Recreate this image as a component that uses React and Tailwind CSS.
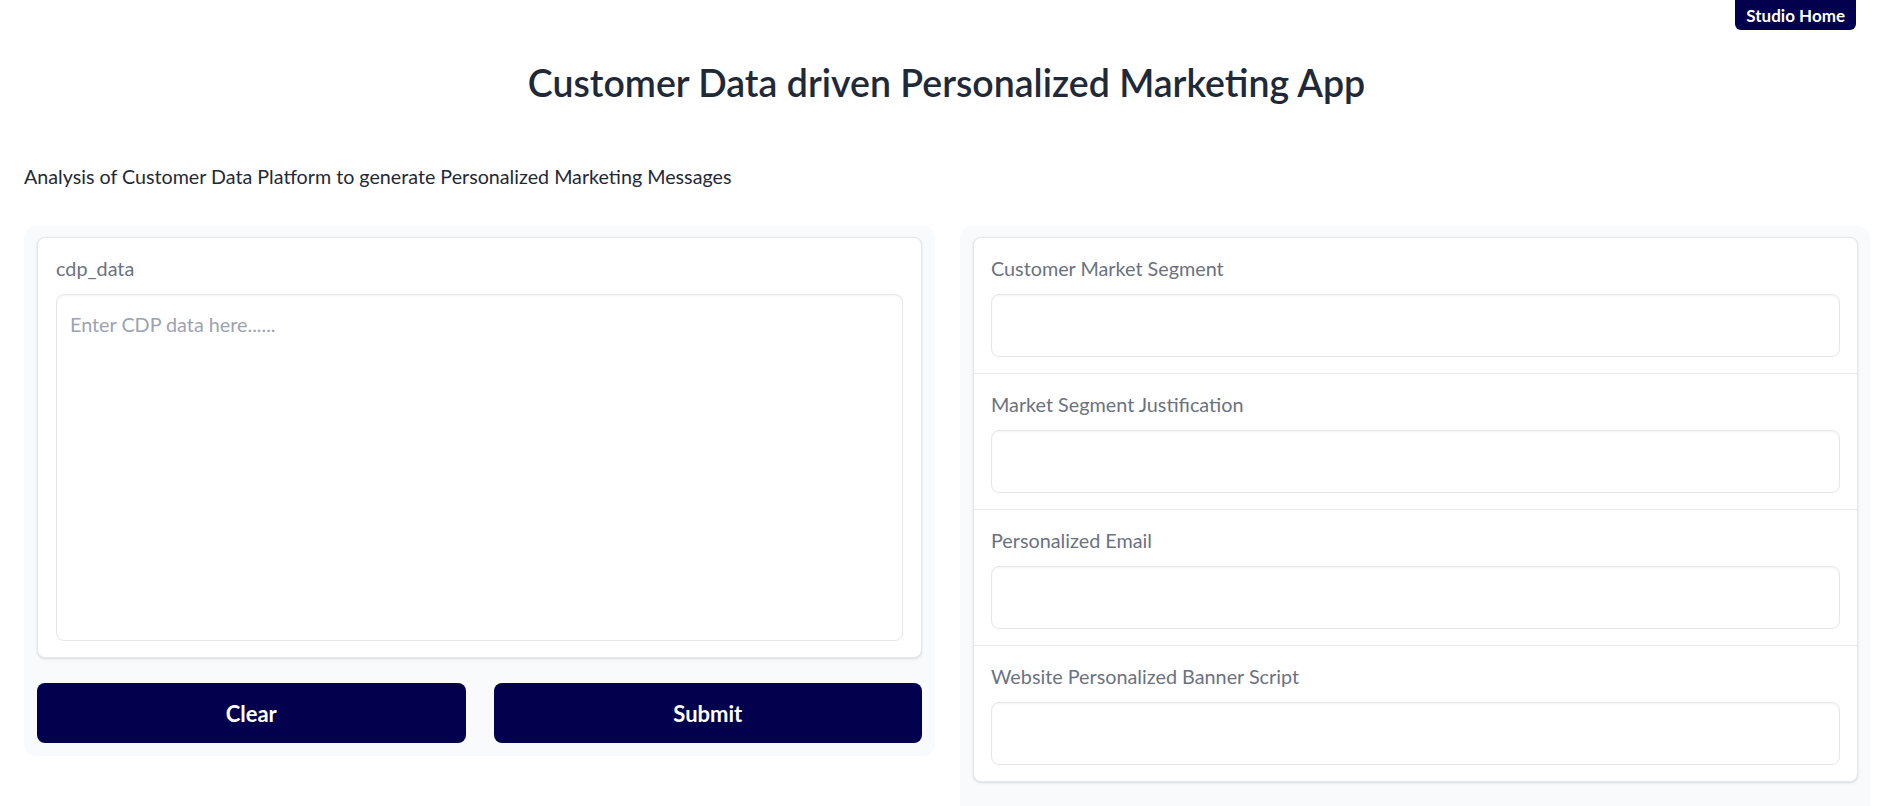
import React from 'react';

const outputs = [
  'Customer Market Segment',
  'Market Segment Justification',
  'Personalized Email',
  'Website Personalized Banner Script',
];

export default function App() {
  return (
    <div className="min-h-screen bg-white text-[#1f2937]" style={{ fontFamily: 'Lato, "Noto Sans", sans-serif' }}>
      {/* Top bar */}
      <div className="flex justify-end pr-[37px]">
        <button className="h-[30px] px-[11px] rounded-b-md bg-[#03004d] text-white text-[17px] font-bold leading-none">
          Studio Home
        </button>
      </div>

      <h1 className="mt-[31px] text-center text-[37.5px] leading-[44px] font-semibold text-[#1f2937]">
        Customer Data driven Personalized Marketing App
      </h1>

      <p className="mt-[58px] pl-[24px] text-[19.7px] leading-[28px] text-[#1f2937]">
        Analysis of Customer Data Platform to generate Personalized Marketing Messages
      </p>

      <div className="mt-[35px] flex items-start gap-[25px] pl-[24px] pr-[23px]">
        {/* Input panel */}
        <div className="flex-1 rounded-xl bg-[#f9fafb] pt-[11px] px-[13px] pb-[13px]">
          <div className="rounded-lg border border-[#e5e7eb] bg-white shadow-sm px-[18px] pt-[17px] pb-[16px]">
            <div className="text-[19.8px] leading-[26px] text-[#6b7280]">cdp_data</div>
            <textarea
              placeholder="Enter CDP data here......"
              className="mt-[13px] block w-full h-[347px] resize-none rounded-lg border border-[#e5e7eb] bg-white px-[13px] pt-[16px] pb-[10px] text-[19.8px] leading-[26px] shadow-[inset_0_1px_2px_rgba(0,0,0,0.05)] outline-none placeholder:text-[#9ca3af]"
            />
          </div>
          <div className="mt-[25px] flex gap-[28px]">
            <button className="flex-1 h-[60px] rounded-lg bg-[#03004d] text-white text-[22px] font-bold">Clear</button>
            <button className="flex-1 h-[60px] rounded-lg bg-[#03004d] text-white text-[22px] font-bold">Submit</button>
          </div>
        </div>

        {/* Output panel */}
        <div className="flex-1 rounded-xl bg-[#f9fafb] pt-[11px] pl-[13px] pr-[12px] pb-[13px]">
          <div className="rounded-lg border border-[#e5e7eb] bg-white shadow-sm divide-y divide-[#e5e7eb]">
            {outputs.map(label => (
              <div key={label} className="px-[17px] pt-[17px] pb-[16px]">
                <div className="text-[19.8px] leading-[26px] text-[#6b7280]">{label}</div>
                <div className="mt-[13px] h-[63px] rounded-lg border border-[#e5e7eb] bg-white shadow-[inset_0_1px_2px_rgba(0,0,0,0.05)]" />
              </div>
            ))}
          </div>
          <div className="mt-[25px] mx-[8px] h-[120px] rounded-lg border border-[#e5e7eb] bg-white" />
        </div>
      </div>
    </div>
  );
}
